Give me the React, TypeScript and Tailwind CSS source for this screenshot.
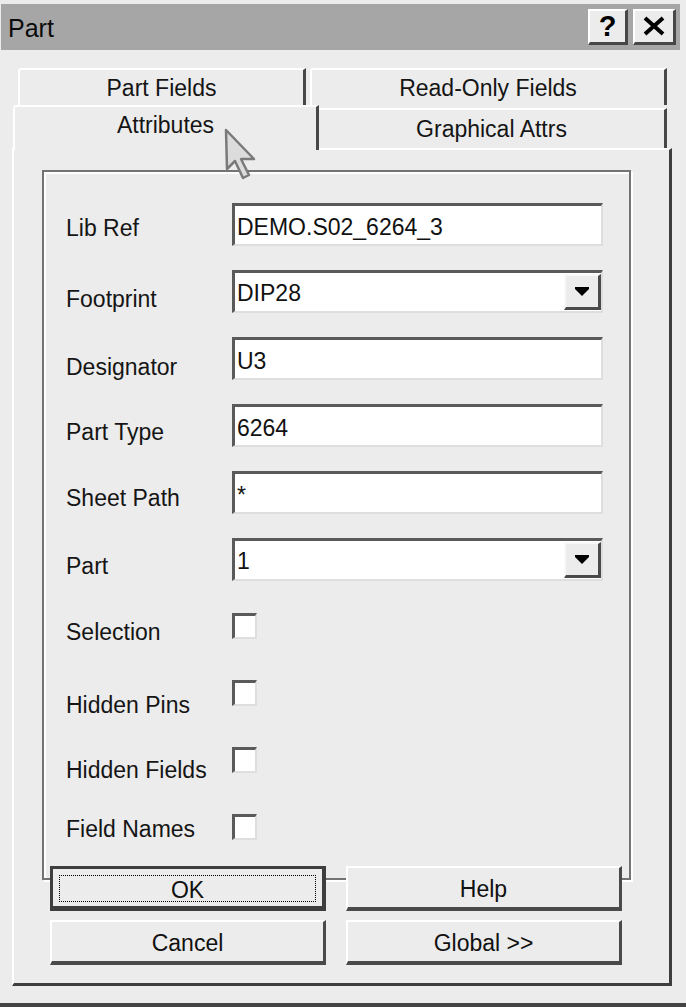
import React from 'react';

const font = "font-['Liberation_Sans',Arial,sans-serif]";

function Sunken({ className = '', children }: { className?: string; children?: React.ReactNode }) {
  return (
    <div
      className={`bg-white border-t-[3px] border-l-[3px] border-b-2 border-r-2 border-t-[#5a5a5a] border-l-[#5a5a5a] border-b-[#dedede] border-r-[#dedede] ${className}`}
    >
      {children}
    </div>
  );
}

function TextBox({ value }: { value: string }) {
  return (
    <Sunken className="h-[43px] w-[371px] flex items-center pl-[2px] pt-[5px] text-[23px] text-[#111]">
      {value}
    </Sunken>
  );
}

function Combo({ value }: { value: string }) {
  return (
    <Sunken className="h-[43px] w-[371px] flex items-center justify-between text-[23px] text-[#111]">
      <span className="pl-[2px] pt-[3px]">{value}</span>
      <div className="h-[36px] w-[37px] bg-[#ececec] border-t-2 border-l-2 border-t-[#f8f8f8] border-l-[#f8f8f8] border-b-[3px] border-r-[3px] border-b-[#4a4a4a] border-r-[#4a4a4a] flex items-center justify-center">
        <svg width="14" height="9" viewBox="0 0 14 9">
          <polygon points="0,0 14,0 14,2 9,7 7,9 5,7 0,2" fill="#000" />
        </svg>
      </div>
    </Sunken>
  );
}

function CheckBox() {
  return <Sunken className="h-[26px] w-[25px]" />;
}

type Row = { label: string; kind: 'text' | 'combo' | 'check'; value?: string; lo: number };

const rows: Row[] = [
  { label: 'Lib Ref', kind: 'text', value: 'DEMO.S02_6264_3', lo: 4 },
  { label: 'Footprint', kind: 'combo', value: 'DIP28', lo: 8 },
  { label: 'Designator', kind: 'text', value: 'U3', lo: 9 },
  { label: 'Part Type', kind: 'text', value: '6264', lo: 7 },
  { label: 'Sheet Path', kind: 'text', value: '*', lo: 6 },
  { label: 'Part', kind: 'combo', value: '1', lo: 7 },
  { label: 'Selection', kind: 'check', lo: 6 },
  { label: 'Hidden Pins', kind: 'check', lo: 12 },
  { label: 'Hidden Fields', kind: 'check', lo: 10 },
  { label: 'Field Names', kind: 'check', lo: 2 },
];

function FieldRow({ row }: { row: Row }) {
  const isCheck = row.kind === 'check';
  return (
    <div className={`h-[67px] flex items-start ${isCheck ? 'pt-[8px]' : ''}`}>
      <div
        className={`w-[166px] flex items-center text-[23px] text-[#151515] ${isCheck ? 'h-[26px]' : 'h-[43px]'}`}
        style={{ paddingTop: row.lo * 2 }}
      >
        {row.label}
      </div>
      {row.kind === 'text' && <TextBox value={row.value!} />}
      {row.kind === 'combo' && <Combo value={row.value!} />}
      {isCheck && <CheckBox />}
    </div>
  );
}

function Button({ label, isDefault }: { label: string; isDefault?: boolean }) {
  if (isDefault) {
    return (
      <div className="h-[45px] bg-[#ececec] border-t-[3px] border-l-[3px] border-b-[5px] border-r-[4px] border-[#3e3e3e] p-[6px_6px_4px_6px]">
        <div className="h-full border border-dotted border-black flex items-center justify-center pt-[3px] text-[23px] text-[#111]">
          {label}
        </div>
      </div>
    );
  }
  return (
    <div className="h-[45px] bg-[#ececec] border-t-2 border-l-2 border-t-white border-l-white border-b-[4px] border-r-[3px] border-b-[#4a4a4a] border-r-[#4a4a4a] flex items-center justify-center pt-[4px] text-[23px] text-[#111]">
      {label}
    </div>
  );
}

export default function App() {
  return (
    <div className={`${font} relative w-[686px] h-[1007px] overflow-hidden bg-[#ececec] flex flex-col`}>
      {/* title bar */}
      <div className="pt-[4px] pr-[6px] pl-[1px]">
        <div className="h-[46px] bg-[#a6a6a6] flex items-center justify-between pl-[7px] pr-[4px]">
          <span className="text-[25px] text-[#0c0c0c] leading-none pt-[2px]">Part</span>
          <div className="flex gap-[5px] pb-[1px]">
            <div className="w-[40px] h-[36px] bg-[#ececec] border-t-2 border-l-2 border-t-white border-l-white border-b-[3px] border-r-[3px] border-b-[#474747] border-r-[#474747] flex items-center justify-center text-[29px] font-bold leading-none text-black">
              ?
            </div>
            <div className="w-[43px] h-[36px] bg-[#ececec] border-t-2 border-l-2 border-t-white border-l-white border-b-[3px] border-r-[3px] border-b-[#474747] border-r-[#474747] flex items-center justify-center">
              <svg width="22" height="20" viewBox="0 0 22 20">
                <path d="M2 2 L20 18 M20 2 L2 18" stroke="#000" strokeWidth="4" />
              </svg>
            </div>
          </div>
        </div>
      </div>

      {/* body */}
      <div className="flex-1 pl-[12px] flex flex-col">
        {/* back tab row */}
        <div className="mt-[18px] ml-[6px] flex gap-[4px] h-[37px]">
          <div className="w-[288px] border-t-2 border-l-2 border-t-white border-l-white border-r-[3px] border-r-[#474747] rounded-tl-[3px] flex items-center justify-center pt-[2px] text-[23px] text-[#151515]">
            Part Fields
          </div>
          <div className="w-[357px] border-t-2 border-l-2 border-t-white border-l-white border-r-[3px] border-r-[#474747] rounded-tl-[3px] flex items-center justify-center pt-[2px] text-[23px] text-[#151515]">
            Read-Only Fields
          </div>
        </div>
        {/* front tab row */}
        <div className="flex items-start h-[43px]">
          <div className="relative z-10 ml-[1px] w-[306px] h-[45px] bg-[#ececec] border-t-2 border-l-2 border-t-white border-l-white border-r-[3px] border-r-[#474747] rounded-tl-[3px] flex items-center justify-center text-[23px] text-[#151515] pb-[6px]">
            Attributes
          </div>
          <div className="mt-[3px] w-[348px] h-[40px] border-t-2 border-t-white border-r-[3px] border-r-[#474747] flex items-center justify-center text-[23px] text-[#151515]">
            Graphical Attrs
          </div>
        </div>
        {/* panel */}
        <div className="w-[660px] h-[838px] border-t-2 border-l-2 border-t-white border-l-white border-r-[3px] border-b-[3px] border-r-[#3e3e3e] border-b-[#3e3e3e] flex flex-col">
          <div className="mt-[20px] ml-[28px] w-[589px] h-[710px] border-2 border-[#737373] shadow-[inset_2px_2px_0_#fff,2px_2px_0_#fff] pt-[31px] pl-[22px]">
            {rows.map((r) => (
              <FieldRow key={r.label} row={r} />
            ))}
          </div>
          <div className="relative z-10 -mt-[14px] ml-[36px] grid grid-cols-[276px_276px] gap-x-[20px] gap-y-[9px]">
            <Button label="OK" isDefault />
            <Button label="Help" />
            <Button label="Cancel" />
            <Button label="Global >>" />
          </div>
        </div>
      </div>
      <div className="h-[4px] mt-[15px] bg-[#444]" />

      {/* mouse pointer */}
      <svg className="absolute z-20 left-[224px] top-[128px]" width="34" height="54" viewBox="0 0 34 54">
        <polygon
          points="2,2 3,41 11,33 19,50 25,47 17,31 30,31"
          fill="#dcdcdc"
          stroke="#7a7a7a"
          strokeWidth="2.5"
          strokeLinejoin="round"
        />
      </svg>
    </div>
  );
}
